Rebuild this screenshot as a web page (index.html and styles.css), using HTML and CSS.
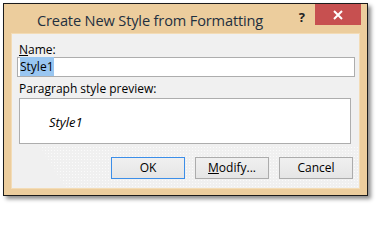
FILE: index.html
```html
<!DOCTYPE html>
<html>
<head>
<meta charset="utf-8">
<link rel="stylesheet" href="styles.css">
</head>
<body>
<div class="window">
  <div class="titlebar">
    <div class="title">Create New Style from Formatting</div>
    <div class="help">?</div>
    <div class="close">
      <svg width="12" height="10" viewBox="0 0 12 10"><path d="M2 1 L10 9 M10 1 L2 9" stroke="#fff" stroke-width="2" fill="none"/></svg>
    </div>
  </div>
  <div class="panel">
    <div class="label"><u>N</u>ame:</div>
    <div class="input"><span class="sel">Style1</span></div>
    <div class="label label2">Paragraph style preview:</div>
    <div class="preview"><span class="pv">Style1</span></div>
    <div class="buttons">
      <div class="btn default">OK</div>
      <div class="btn"><u>M</u>odify...</div>
      <div class="btn">Cancel</div>
    </div>
  </div>
</div>
</body>
</html>
```
FILE: styles.css
```css
html, body { margin: 0; padding: 0; background: #fff; }
body { width: 377px; height: 205px; overflow: hidden; font-family: "Open Sans", "Noto Sans", sans-serif; }
.window {
  margin: 3px 0 0 3px;
  width: 363px;
  height: 191px;
  border: 1px solid #1b1b1b;
  background: #eccd9d;
  box-shadow: 3px 3px 4px rgba(0,0,0,0.45);
  display: flex;
  flex-direction: column;
}
.titlebar { height: 30px; flex: none; display: flex; align-items: flex-start; }
.title {
  margin-left: 33px;
  margin-top: 6px;
  font-size: 14.6px;
  color: #1f3040;
  letter-spacing: -0.15px;
  flex: 1;
}
.help { font-weight: bold; font-size: 13px; color: #222; margin-top: 4px; margin-right: 10px; }
.close {
  width: 46px; height: 21px; background: #c75050; margin-right: 6px;
  display: flex; align-items: center; justify-content: center;
}
.close svg { display: block; }
.panel {
  margin: 0 8px 7px 8px;
  flex: 1;
  background: #f0f0f0;
  box-shadow: 0 0 0 1px #f3dcb6;
  padding: 8px 6px 0 5px;
  font-size: 12px;
  color: #000;
  display: flex;
  flex-direction: column;
}
.label { height: 15px; line-height: 15px; padding-left: 2px; }
.input {
  height: 18px;
  border: 1px solid #adadad;
  background: #fff;
  width: 334px;
  padding-left: 2px;
  line-height: 18px;
}
.sel { background: #99c6f1; padding: 1px 0; }
.label2 { margin-top: 4px; }
.preview {
  margin: 2px 0 0 2px;
  width: 330px;
  height: 44px;
  flex: none;
  border: 1px solid #adadad;
  background: #fff;
}
.pv { display: block; font-style: italic; font-size: 13px; margin: 14px 0 0 29px; }
.buttons {
  flex: 1;
  display: flex;
  justify-content: flex-end;
  align-items: flex-start;
  gap: 10px;
  margin: 3px -6px 0 -5px;
  padding: 10px 6px 0 6px;
  background:
    linear-gradient(58deg, #f0f0f0 14%, rgba(240,240,240,0) 15%),
    linear-gradient(90deg, rgba(240,240,240,0) 1px, #f0f0f0 1px) 0 0 / 3px 3px,
    linear-gradient(180deg, #fbfbfb 1px, #f0f0f0 1px) 0 0 / 3px 3px;
}
.btn {
  width: 72px; height: 20px; line-height: 20px; text-align: center;
  border: 1px solid #acacac;
  background: linear-gradient(#f0f0f0, #e5e5e5);
}
.btn.default { border-color: #3c8ee8; }
```
